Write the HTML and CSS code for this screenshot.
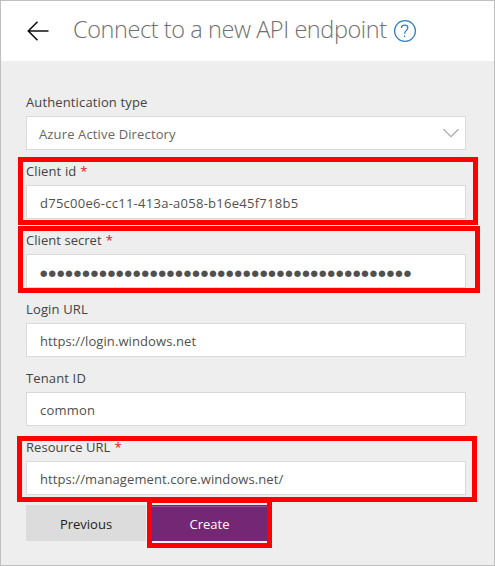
FILE: index.html
```html
<!DOCTYPE html>
<html lang="en">
<head>
<meta charset="utf-8">
<title>Connect to a new API endpoint</title>
<link rel="stylesheet" href="styles.css">
</head>
<body>
<main class="panel">
  <header class="header">
    <svg class="back" width="24" height="22" viewBox="0 0 24 22"><path d="M22.5 11H2.5M11.5 1.8L2.3 11L11.5 20.2"/></svg>
    <h1 class="title">Connect to a new API endpoint</h1>
    <svg class="help" width="24" height="24" viewBox="0 0 24 24"><circle cx="12" cy="12" r="10.4"/><path d="M8.5 9C8.5 7 10 6.2 11.7 6.2C13.6 6.2 14.8 7.2 14.8 8.8C14.8 11.3 11.6 11.6 11.6 14.8"/><path d="M11.6 16.5V18"/></svg>
  </header>
  <form class="form">
    <div class="field">
      <label class="label"><span class="t-auth">Authentication type</span></label>
      <div class="box select"><span class="t-azure">Azure Active Directory</span>
        <svg class="chevron" width="18" height="10" viewBox="0 0 18 10"><path d="M1.5 1.2L9 8.6L16.5 1.2"/></svg>
      </div>
    </div>
    <div class="field">
      <label class="label"><span class="t-id">Client id</span><b class="req">*</b></label>
      <div class="box"><span class="t-guid">d75c00e6-cc11-413a-a058-b16e45f718b5</span></div>
    </div>
    <div class="field">
      <label class="label"><span class="t-secret">Client secret</span><b class="req">*</b></label>
      <div class="box"><span class="dots">●●●●●●●●●●●●●●●●●●●●●●●●●●●●●●●●●●●●●●●●●●●●</span></div>
    </div>
    <div class="field">
      <label class="label"><span class="t-login">Login URL</span></label>
      <div class="box"><span class="t-url">https://login.windows.net</span></div>
    </div>
    <div class="field">
      <label class="label"><span class="t-login">Tenant ID</span></label>
      <div class="box"><span class="t-common">common</span></div>
    </div>
    <div class="field">
      <label class="label"><span class="t-secret">Resource URL</span><b class="req">*</b></label>
      <div class="box"><span class="t-url">https://management.core.windows.net/</span></div>
    </div>
    <div class="actions">
      <button type="button" class="btn">Previous</button>
      <button type="button" class="btn primary">Create</button>
    </div>
  </form>
  <div class="mark mark-id"></div>
  <div class="mark mark-secret"></div>
  <div class="mark mark-resource"></div>
  <div class="mark mark-create"></div>
</main>
</body>
</html>
```
FILE: styles.css
```css
* { box-sizing: border-box; }
body { margin: 0; font-family: "Open Sans", "Noto Sans", sans-serif; font-size: 13px; color: #444; }
.panel { position: relative; width: 495px; height: 566px; background: #eee; border: 1px solid #c0c0c0; overflow: hidden; }
.header { display: flex; height: 60px; background: #fff; padding-left: 25px; }
.back { margin-top: 19px; fill: none; stroke: #111; stroke-width: 1.6; flex: none; }
.title { margin: 11px 0 0 23px; width: 319px; font-size: 23.5px; font-weight: 300; line-height: 34px; letter-spacing: -0.42px; color: #707070; white-space: nowrap; }
.help { margin: 18px 0 0 1px; fill: none; stroke: #3580c4; stroke-width: 1.3; flex: none; }
.form { padding: 28px 28px 0 25px; }
.field { height: 69px; }
.label { display: flex; height: 27px; line-height: 26px; white-space: nowrap; }
.req { margin-left: 4px; color: #e81123; font-weight: 400; }
.box { display: flex; align-items: center; height: 34px; width: 440px; padding: 2px 5px 0 13px; background: #fff; border: 1px solid #dadada; color: #505050; white-space: nowrap; }
.select { justify-content: space-between; padding-left: 12px; padding-top: 1px; color: #666; }
.chevron { fill: none; stroke: #aaa; stroke-width: 1.2; margin-top: -1px; }
.t-auth { letter-spacing: 0.13px; }
.t-azure { letter-spacing: 0.14px; }
.t-id { letter-spacing: 0.12px; }
.t-guid { letter-spacing: 0.265px; }
.t-secret { letter-spacing: 0.05px; }
.t-login { letter-spacing: 0.14px; }
.t-url { letter-spacing: 0.09px; }
.t-common { letter-spacing: 0.2px; }
.dots { font-family: "DejaVu Sans", sans-serif; font-size: 8.5px; letter-spacing: 1.04px; line-height: 16px; padding: 1px 0 0; }
.actions { display: flex; gap: 1px; margin-top: 2px; }
.btn { width: 120px; height: 36px; border: 0; padding: 2px 0 0; background: #dcdcdc; color: #222; font: inherit; line-height: 34px; }
.primary { padding: 1px 0 0 5px; background: #742774; color: #fff; border-top: 1px solid #742774; box-shadow: inset 0 1px #8b4c8b; }
.mark { position: absolute; border: 5px solid #f00; }
.mark-id { left: 17px; top: 156px; width: 460px; height: 68px; }
.mark-secret { left: 17px; top: 225px; width: 462px; height: 67px; }
.mark-resource { left: 16px; top: 435px; width: 460px; height: 66px; }
.mark-create { left: 146px; top: 497px; width: 125px; height: 50px; }
```
